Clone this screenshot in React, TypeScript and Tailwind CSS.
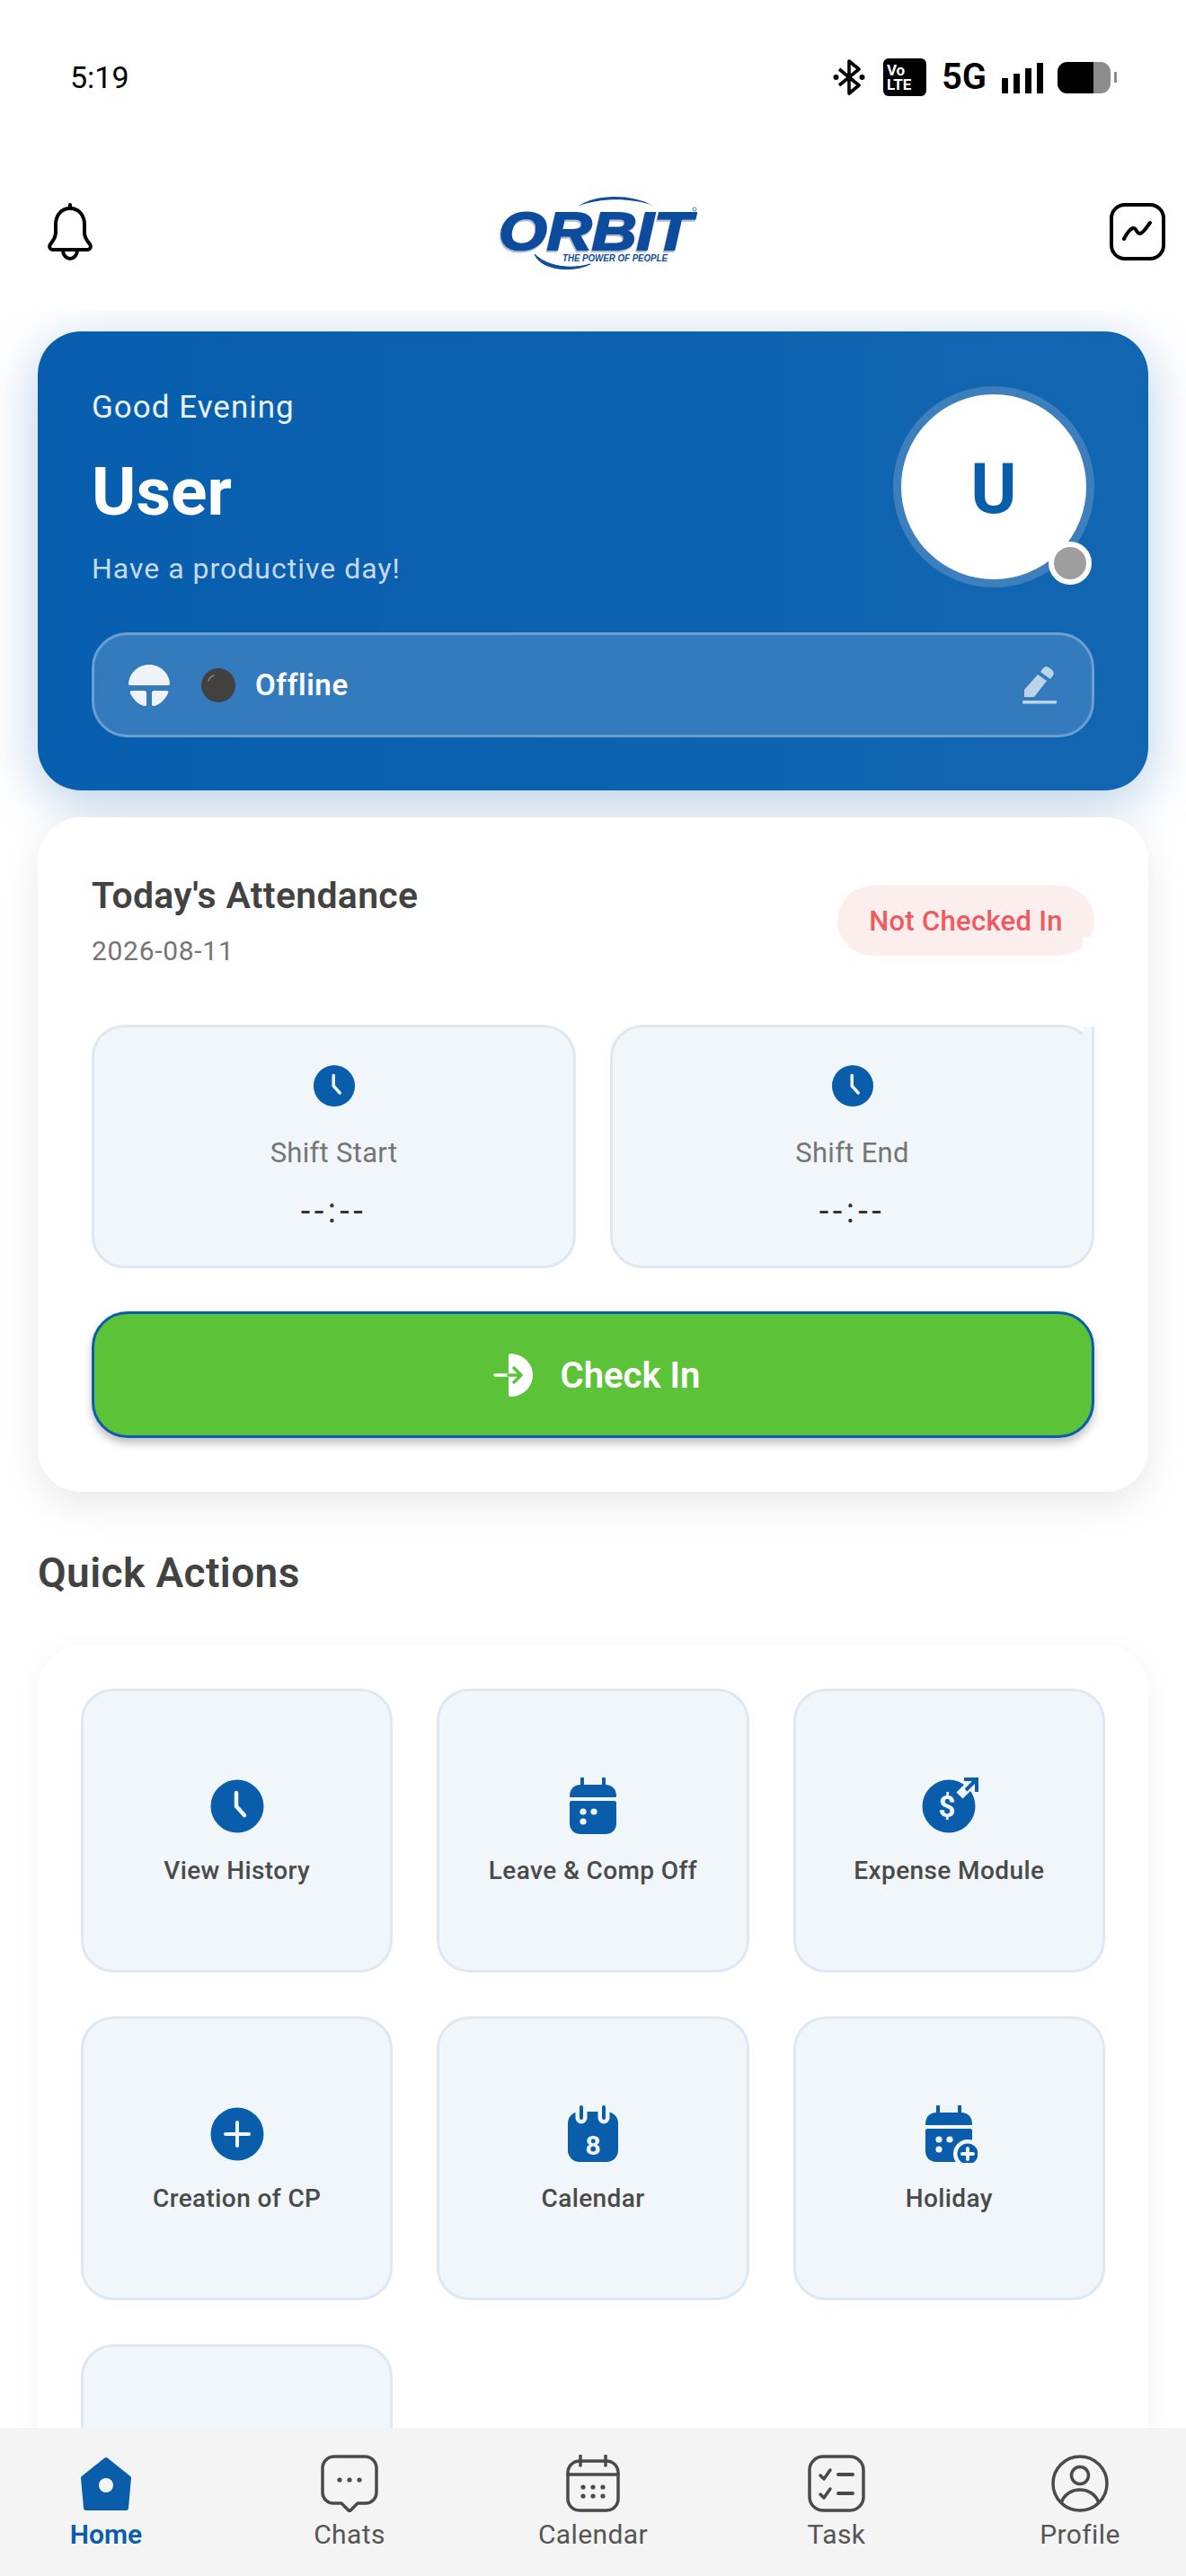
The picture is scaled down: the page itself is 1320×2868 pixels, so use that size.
import type { ReactNode } from "react";

const BLUE = "#0a5dab";
const TILE = "#f1f6fb";

function Bluetooth() {
  return (
    <svg width="36" height="40" viewBox="0 0 36 40" fill="none">
      <path d="M7 11l22 18-11 9V2l11 9L7 29" stroke="#000" strokeWidth="3.6" strokeLinejoin="round" />
      <circle cx="3.5" cy="20" r="3" fill="#000" />
      <circle cx="32.5" cy="20" r="3" fill="#000" />
    </svg>
  );
}

function StatusBar() {
  return (
    <div className="h-[170px] shrink-0 flex items-center justify-between pl-[78px] pr-[77px] pt-[2px]">
      <span className="text-[34px] leading-none text-black">5:19</span>
      <div className="flex items-center">
        <Bluetooth />
        <div className="ml-[20px] w-[48px] h-[42px] rounded-[6px] bg-black text-white text-[17px] leading-[16px] font-bold pl-[4px] pt-[5px]">
          <div>Vo</div>
          <div>LTE</div>
        </div>
        <span className="ml-[17px] text-[40px] leading-none font-semibold text-black">5G</span>
        <div className="ml-[17px] flex items-end gap-[6px] h-[35px]">
          <div className="w-[7px] h-[17px] bg-black" />
          <div className="w-[7px] h-[22px] bg-black" />
          <div className="w-[7px] h-[28px] bg-black" />
          <div className="w-[7px] h-[34px] bg-black" />
        </div>
        <div className="ml-[16px] w-[59px] h-[35px] rounded-[11px] bg-[#8c8c8c] overflow-hidden">
          <div className="w-[40px] h-full bg-black" />
        </div>
        <div className="ml-[4px] w-[3px] h-[12px] bg-[#8c8c8c]" />
      </div>
    </div>
  );
}

function Bell() {
  return (
    <svg width="52" height="64" viewBox="0 0 52 64" fill="none" stroke="#000" strokeWidth="4" strokeLinecap="round" strokeLinejoin="round">
      <path d="M26 6c-10 0-16 8-16 18v9c0 6-3 9-6 13-2 3 0 6 3 6h38c3 0 5-3 3-6-3-4-6-7-6-13v-9c0-10-6-18-16-18z" />
      <path d="M26 2v4" />
      <path d="M18 53c0 5 4 9 8 9s8-4 8-9" />
    </svg>
  );
}

function TrendBox() {
  return (
    <svg width="62" height="64" viewBox="0 0 62 64" fill="none" stroke="#000" strokeWidth="4" strokeLinecap="round" strokeLinejoin="round">
      <rect x="2" y="2" width="58" height="60" rx="15" />
      <path d="M16 40c3-6 6-11 10-12 4-1 4 7 8 6 4-1 7-7 11-12" />
    </svg>
  );
}

function Logo() {
  return (
    <svg width="224" height="85" viewBox="0 0 224 85" fill="none">
      <defs>
        <filter id="orbit-edge" x="-5%" y="-5%" width="110%" height="115%">
          <feDropShadow dx="-1" dy="2" stdDeviation="0.3" floodColor="#a9bcd6" />
        </filter>
      </defs>
      <text x="3" y="62" fontFamily="Liberation Sans" fontStyle="italic" fontWeight="700" fontSize="60" textLength="215" lengthAdjust="spacingAndGlyphs" fill="#0f4c9c" stroke="#0f4c9c" strokeWidth="2.2" filter="url(#orbit-edge)">
        ORBIT
      </text>
      <path d="M91 14C110 0 150-1 175 13C150 4 115 4 91 14z" fill="#0f4c9c" />
      <path d="M43 67C50 85 85 88 105 78C85 84 58 82 43 67z" fill="#0f4c9c" stroke="#0f4c9c" />
      <text x="74" y="75" fontFamily="Liberation Sans" fontStyle="italic" fontWeight="700" fontSize="10" textLength="117" lengthAdjust="spacingAndGlyphs" fill="#0f4c9c">
        THE POWER OF PEOPLE
      </text>
      <circle cx="221" cy="17" r="2" stroke="#0f4c9c" strokeWidth="0.7" />
    </svg>
  );
}

function StatusMark() {
  return (
    <svg width="46" height="48" viewBox="0 0 46 48" fill="#eef3fa">
      <path d="M2 24C.5 24 0 23 0 22 1 10 11 1 23 1s22 9 23 21c0 1-.5 2-2 2z" />
      <path d="M4 30h14c1 0 2 1 2 2v13c0 2-1 2-3 2C10 45 5 39 2 33c-1-2 0-3 2-3z" />
      <path d="M28 30h14c2 0 3 1 2 3-3 6-8 12-15 14-2 0-3 0-3-2V32c0-1 1-2 2-2z" />
    </svg>
  );
}

function BlackBall() {
  return (
    <svg width="38" height="38" viewBox="0 0 38 38" fill="none">
      <circle cx="19" cy="19" r="19" fill="#434040" />
      <path d="M8 14c1-3 3-5 6-6" stroke="#8b8787" strokeWidth="1.5" strokeLinecap="round" />
    </svg>
  );
}

function EditPen() {
  return (
    <svg width="40" height="42" viewBox="0 0 40 42" fill="#bcd4ea">
      <rect x="1" y="38" width="38" height="3.5" rx="1" />
      <path d="M3 34v-8L18 9l10 7-14 18z" />
      <path d="M21 6l3-4c2-2 4-2 6-1l4 3c2 2 2 4 1 6l-3 4z" />
    </svg>
  );
}

function ClockIcon({ size }: { size: number }) {
  return (
    <svg width={size} height={size} viewBox="0 0 64 64" fill="none">
      <circle cx="32" cy="32" r="29.5" fill={BLUE} />
      <path d="M31 17v15l9 10" stroke={TILE} strokeWidth="4.5" strokeLinecap="round" strokeLinejoin="round" />
    </svg>
  );
}

function CheckInIcon() {
  return (
    <svg width="44" height="50" viewBox="0 0 44 50" fill="none">
      <path d="M19 1c14 0 25 11 25 24S33 49 19 49c-1 0-2-1-2-2V3c0-1 1-2 2-2z" fill="#fff" />
      <path d="M2 25h15" stroke="#fff" strokeWidth="3.5" strokeLinecap="round" />
      <path d="M17 25h13M23 17l8 8-8 8" stroke="#5cc238" strokeWidth="3.5" strokeLinecap="round" strokeLinejoin="round" />
    </svg>
  );
}

function LeaveCalendar({ badge }: { badge?: boolean }) {
  return (
    <svg width="64" height="64" viewBox="0 0 64 64" fill="none">
      <path d="M20 1v9M44 1v9" stroke={BLUE} strokeWidth="4" strokeLinecap="round" />
      <path d="M6 21c0-8 5-13 12-13h28c7 0 12 5 12 13 0 .6-.4 1-1 1H7c-.6 0-1-.4-1-1z" fill={BLUE} />
      <path d="M8 26h48c1 0 2 1 2 2v23c0 7-5 12-12 12H18C11 63 6 58 6 51V28c0-1 1-2 2-2z" fill={BLUE} />
      <circle cx="21" cy="38" r="3.6" fill={TILE} />
      <circle cx="33" cy="38" r="3.6" fill={TILE} />
      <circle cx="21" cy="49" r="3.6" fill={TILE} />
      {badge && (
        <>
          <circle cx="53" cy="54" r="16" fill={TILE} />
          <circle cx="53" cy="54" r="11.5" fill={BLUE} />
          <path d="M53 48v12M47 54h12" stroke={TILE} strokeWidth="4" strokeLinecap="round" />
        </>
      )}
    </svg>
  );
}

function ExpenseIcon() {
  return (
    <svg width="64" height="64" viewBox="0 0 64 64" fill="none" overflow="visible">
      <circle cx="32" cy="32" r="29.5" fill={BLUE} />
      <path d="M44 20L62 2" stroke={TILE} strokeWidth="10" />
      <path d="M49 2h14v14" stroke={BLUE} strokeWidth="4" />
      <path d="M62 3L51 14" stroke={BLUE} strokeWidth="4" />
      <text x="30" y="44" textAnchor="middle" fontFamily="Roboto" fontWeight="700" fontSize="33" fill={TILE}>
        $
      </text>
    </svg>
  );
}

function PlusIcon() {
  return (
    <svg width="64" height="64" viewBox="0 0 64 64" fill="none">
      <circle cx="32" cy="32" r="29.5" fill={BLUE} />
      <path d="M32 19v26M19 32h26" stroke={TILE} strokeWidth="4" strokeLinecap="round" />
    </svg>
  );
}

function DateIcon() {
  return (
    <svg width="64" height="64" viewBox="0 0 64 64" fill="none">
      <rect x="4" y="7" width="56" height="56" rx="13" fill={BLUE} />
      <path d="M19 1v13M44 1v13" stroke={TILE} strokeWidth="13" strokeLinecap="round" />
      <path d="M19 2v12M44 2v12" stroke={BLUE} strokeWidth="4" strokeLinecap="round" />
      <text x="32" y="55" textAnchor="middle" fontFamily="Roboto" fontWeight="700" fontSize="30" fill={TILE}>
        8
      </text>
    </svg>
  );
}

function NavHome() {
  return (
    <svg width="64" height="64" viewBox="0 0 64 64" fill="none">
      <path d="M32 6L57 26 54 59H10L7 26z" fill={BLUE} stroke={BLUE} strokeWidth="6" strokeLinejoin="round" />
      <circle cx="32" cy="34" r="8" fill="#f4f4f4" />
    </svg>
  );
}

function NavChats() {
  return (
    <svg width="64" height="64" viewBox="0 0 64 64" fill="none" stroke="#4a4a4a" strokeWidth="3.5" strokeLinejoin="round">
      <path d="M15 2h34a13 13 0 0 1 13 13v27a12 12 0 0 1-12 12h-9l-9 9-9-9h-9A12 12 0 0 1 2 42V15A13 13 0 0 1 15 2z" />
      <circle cx="21" cy="28" r="2.6" fill="#4a4a4a" stroke="none" />
      <circle cx="32" cy="28" r="2.6" fill="#4a4a4a" stroke="none" />
      <circle cx="43" cy="28" r="2.6" fill="#4a4a4a" stroke="none" />
    </svg>
  );
}

function NavCalendar() {
  return (
    <svg width="64" height="64" viewBox="0 0 64 64" fill="none" stroke="#4a4a4a" strokeWidth="3.5" strokeLinecap="round">
      <rect x="4" y="7" width="56" height="55" rx="13" />
      <path d="M4 22h56" />
      <path d="M18 1v11M46 1v11" />
      {[21, 32, 43].map((x) => (
        <g key={x}>
          <circle cx={x} cy="36" r="2.6" fill="#4a4a4a" stroke="none" />
          <circle cx={x} cy="46" r="2.6" fill="#4a4a4a" stroke="none" />
        </g>
      ))}
    </svg>
  );
}

function NavTask() {
  return (
    <svg width="64" height="64" viewBox="0 0 64 64" fill="none" stroke="#4a4a4a" strokeWidth="3.5" strokeLinecap="round" strokeLinejoin="round">
      <rect x="2" y="2" width="60" height="60" rx="15" />
      <path d="M14 23l4 4 7-10M14 44l4 4 7-10" />
      <path d="M34 22h16M34 43h16" strokeWidth="4" />
    </svg>
  );
}

function NavProfile() {
  return (
    <svg width="64" height="64" viewBox="0 0 64 64" fill="none" stroke="#4a4a4a" strokeWidth="3.5">
      <circle cx="32" cy="32" r="30" />
      <circle cx="32" cy="23" r="9.5" />
      <path d="M11 54c3-10 12-15 21-15s18 5 21 15" />
    </svg>
  );
}

function HeroCard() {
  return (
    <div className="rounded-[48px] bg-gradient-to-r from-[#075eae] to-[#1266b1] pt-[61px] pb-[59px] px-[60px] shadow-[0_14px_60px_rgba(10,93,171,0.3)]">
      <div className="flex justify-between">
        <div className="pt-[2px] text-white">
          <div className="text-[35px] leading-[44px] tracking-[1px] text-[#e9f0f8]">Good Evening</div>
          <div className="mt-[29px] text-[75px] leading-[84px] font-bold">User</div>
          <div className="mt-[24px] text-[32px] leading-[40px] tracking-[1px] text-[#c6d9ec]">Have a productive day!</div>
        </div>
        <div className="relative w-[224px] h-[224px] rounded-full bg-white border-[9px] border-[#3d7fbd] flex items-center justify-center pt-[5px]">
          <span className="text-[78px] font-bold leading-none text-[#0a5dab]">U</span>
          <div className="absolute right-[-6px] bottom-[-6px] w-[48px] h-[48px] rounded-full bg-[#9e9e9e] border-[6px] border-white" />
        </div>
      </div>
      <div className="mt-[50px] h-[117px] rounded-[40px] bg-[#337bbc] border-[3px] border-[#6a9fd0] flex items-center pl-[38px] pr-[38px]">
        <StatusMark />
        <div className="ml-[35px]">
          <BlackBall />
        </div>
        <span className="ml-[22px] text-[33px] font-semibold tracking-[0.6px] text-white">Offline</span>
        <div className="ml-auto">
          <EditPen />
        </div>
      </div>
    </div>
  );
}

function ShiftTile({ label, clipped }: { label: string; clipped?: boolean }) {
  return (
    <div className="relative flex-1 h-[271px] rounded-[36px] bg-[#f1f6fb] border-[3px] border-[#dde8f3] flex flex-col items-center pt-[40px]">
      <ClockIcon size={50} />
      <div className="mt-[30px] text-[31px] leading-[40px] tracking-[0.3px] text-[#757575]">{label}</div>
      <div className="mt-[22px] text-[38px] leading-[44px] tracking-[4.5px] text-[#333]">--:--</div>
      {clipped && <div className="absolute top-[-1px] right-[-3px] w-[13px] h-[36px] bg-[#f1f6fb] border-r-[3px] border-[#dde8f3]" />}
    </div>
  );
}

function AttendanceCard() {
  return (
    <div className="mt-[30px] rounded-[48px] bg-white pt-[63px] pb-[60px] px-[60px] shadow-[0_14px_44px_rgba(0,0,0,0.09)]">
      <div className="flex justify-between items-start">
        <div>
          <div className="text-[41px] leading-[48px] font-semibold tracking-[0.3px] text-[#424242]">Today's Attendance</div>
          <div className="mt-[18px] text-[30px] leading-[40px] tracking-[0.7px] text-[#757575]">2026-08-11</div>
        </div>
        <div className="relative mt-[13px] w-[286px] h-[78px] rounded-[39px] bg-[#fdeeee] flex items-center justify-center pt-[2px] text-[31px] font-medium tracking-[0.3px] text-[#ef5a5f]">
          Not Checked In
          <div className="absolute right-0 bottom-0 w-[13px] h-[21px] bg-white" />
        </div>
      </div>
      <div className="mt-[62px] flex gap-[38px]">
        <ShiftTile label="Shift Start" />
        <ShiftTile label="Shift End" clipped />
      </div>
      <button className="mt-[48px] w-full h-[141px] rounded-[40px] bg-[#5cc238] border-[3px] border-[#0a5dab] shadow-[0_6px_10px_rgba(0,0,0,0.25)] flex items-center justify-center gap-[31px] pl-[8px]">
        <CheckInIcon />
        <span className="text-[40px] font-semibold text-white pt-[3px]">Check In</span>
      </button>
    </div>
  );
}

function ActionTile({ icon, label }: { icon?: ReactNode; label?: string }) {
  return (
    <div className="h-[316px] rounded-[36px] bg-[#f1f6fb] border-[3px] border-[#dde8f3] flex flex-col items-center pt-[96px]">
      {icon}
      {label && <div className="mt-[22px] text-[28px] leading-[36px] font-medium tracking-[0.4px] text-[#4a4a4a]">{label}</div>}
    </div>
  );
}

function QuickActions() {
  return (
    <>
      <div className="mt-[62px] text-[46px] leading-[56px] font-semibold tracking-[0.4px] text-[#424242]">Quick Actions</div>
      <div className="mt-[53px] rounded-[48px] bg-white p-[48px] shadow-[0_4px_30px_rgba(0,0,0,0.05)]">
        <div className="grid grid-cols-3 gap-[49px]">
          <ActionTile icon={<ClockIcon size={64} />} label="View History" />
          <ActionTile icon={<LeaveCalendar />} label="Leave & Comp Off" />
          <ActionTile icon={<ExpenseIcon />} label="Expense Module" />
          <ActionTile icon={<PlusIcon />} label="Creation of CP" />
          <ActionTile icon={<DateIcon />} label="Calendar" />
          <ActionTile icon={<LeaveCalendar badge />} label="Holiday" />
          <ActionTile />
        </div>
      </div>
    </>
  );
}

function NavItem({ icon, label, active }: { icon: ReactNode; label: string; active?: boolean }) {
  return (
    <div className="w-[120px] flex flex-col items-center">
      {icon}
      <span className={active ? "mt-[5px] text-[30px] leading-[40px] font-semibold text-[#0a5dab]" : "mt-[5px] text-[30px] leading-[40px] tracking-[0.4px] text-[#555]"}>
        {label}
      </span>
    </div>
  );
}

function BottomNav() {
  return (
    <div className="h-[165px] shrink-0 bg-[#f4f4f4] flex justify-between px-[58px] pt-[30px] relative z-10">
      <NavItem icon={<NavHome />} label="Home" active />
      <NavItem icon={<NavChats />} label="Chats" />
      <NavItem icon={<NavCalendar />} label="Calendar" />
      <NavItem icon={<NavTask />} label="Task" />
      <NavItem icon={<NavProfile />} label="Profile" />
    </div>
  );
}

export default function App() {
  return (
    <div className="w-[1320px] h-[2868px] bg-white flex flex-col overflow-hidden font-['Roboto',sans-serif]">
      <StatusBar />
      <div className="h-[176px] shrink-0 flex items-center justify-between pl-[52px] pr-[23px]">
        <Bell />
        <div className="-ml-[12px]">
          <Logo />
        </div>
        <TrendBox />
      </div>
      <div className="flex-1 min-h-0 overflow-hidden px-[42px] pt-[23px]">
        <HeroCard />
        <AttendanceCard />
        <QuickActions />
      </div>
      <BottomNav />
    </div>
  );
}
